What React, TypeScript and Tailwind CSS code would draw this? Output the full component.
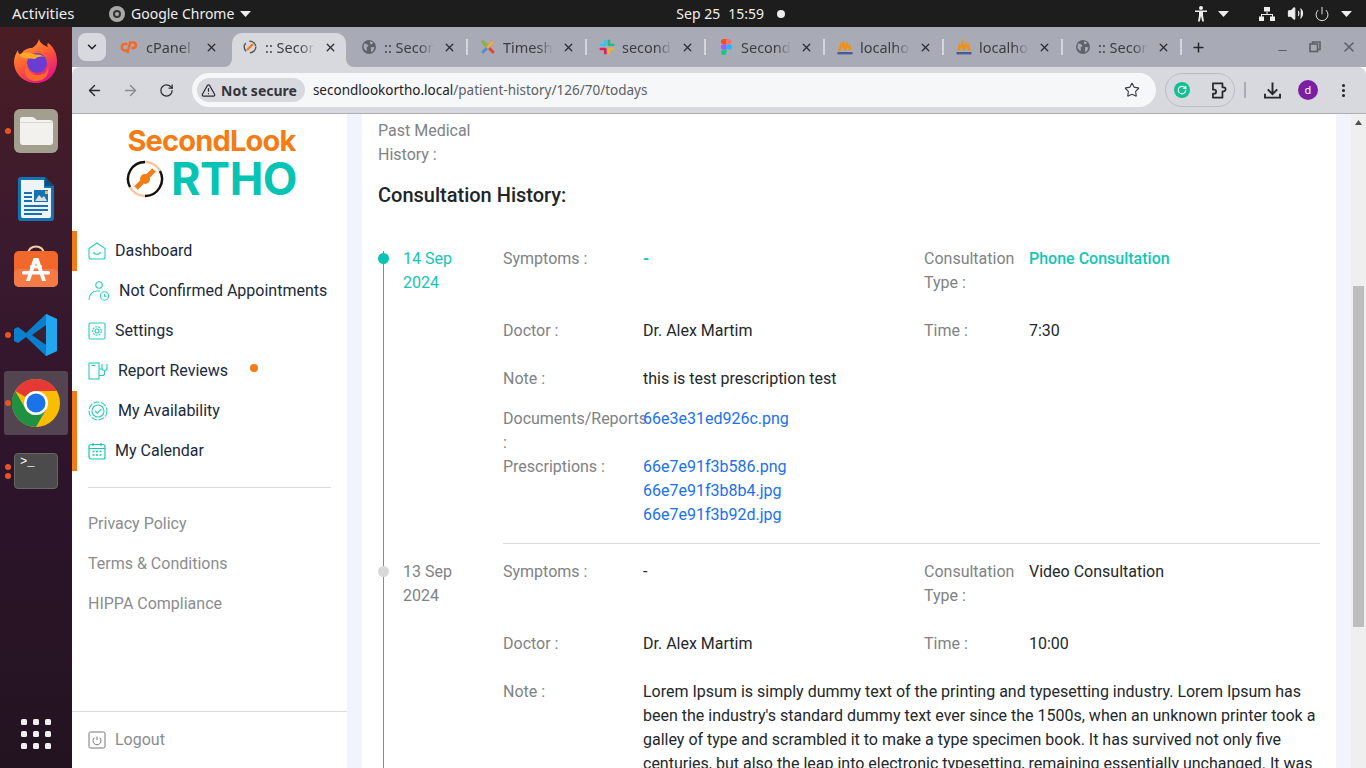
import React from "react";
import { ChevronDown, X, ArrowLeft, ArrowRight, RotateCw, TriangleAlert, Star, EllipsisVertical, Plus, Minus, Power, Volume2 } from "lucide-react";

const Tri = ({ c = "" }: { c?: string }) => (
  <svg width="11" height="6" viewBox="0 0 11 6" className={c}><path d="M0 0h11L5.5 6z" fill="#eee" /></svg>
);

const CP = () => (
  <svg width="18" height="14" viewBox="0 0 18 14" fill="none" stroke="#f26a2a" strokeWidth="2.6" className="-ml-[4px]"><path d="M7.5 4H5a3 3 0 0 0 0 6.5h2.2" /><path d="M7.5 13l2.6-10.5H13a2.8 2.8 0 0 1 0 5.6h-1.5" /></svg>
);
const Slack = () => (
  <svg width="16" height="16" viewBox="0 0 16 16"><rect x="5" y="0.5" width="2.6" height="6.5" rx="1.3" fill="#36c5f0" /><rect x="0.5" y="4.5" width="6.5" height="2.6" rx="1.3" fill="#36c5f0" /><rect x="8.6" y="0.5" width="2.6" height="6.5" rx="1.3" fill="#2eb67d" /><rect x="9" y="4.5" width="6.5" height="2.6" rx="1.3" fill="#2eb67d" /><rect x="8.6" y="9" width="2.6" height="6.5" rx="1.3" fill="#ecb22e" /><rect x="9" y="8.7" width="6.5" height="2.6" rx="1.3" fill="#ecb22e" /><rect x="5" y="9" width="2.6" height="6.5" rx="1.3" fill="#e01e5a" /><rect x="0.5" y="8.7" width="6.5" height="2.6" rx="1.3" fill="#e01e5a" /></svg>
);
const Figma = () => (
  <svg width="11" height="16" viewBox="0 0 11 16"><path d="M0 2.7A2.7 2.7 0 0 1 2.7 0h2.8v5.3H2.7A2.7 2.7 0 0 1 0 2.7z" fill="#f24e1e" /><path d="M5.5 0h2.8a2.7 2.7 0 0 1 0 5.3H5.5z" fill="#ff7262" /><path d="M0 8a2.7 2.7 0 0 1 2.7-2.7h2.8v5.4H2.7A2.7 2.7 0 0 1 0 8z" fill="#a259ff" /><circle cx="8.2" cy="8" r="2.7" fill="#1abcfe" /><path d="M0 13.3a2.7 2.7 0 0 1 2.7-2.6h2.8v2.6a2.7 2.7 0 0 1-5.5 0z" fill="#0acf83" /></svg>
);
const Joomla = () => (
  <svg width="16" height="16" viewBox="0 0 16 16" fill="none" strokeWidth="3" strokeLinecap="round"><path d="M3 3l10 10" stroke="#ee4035" /><path d="M13 3L3 13" stroke="#4f91cd" /><path d="M3 3l5 5" stroke="#7ac143" /><path d="M13 3L8 8" stroke="#f9a541" /></svg>
);
const Pma = () => (
  <svg width="16" height="16" viewBox="0 0 16 16"><path d="M1 11.5L3.5 3l1 4L6.5 0l2 7 1.5-5 1.5 4.5L12.5 4l2.5 7.5h-3L10.5 8 9 11.5H7L5.5 7.5 4 11.5z" fill="#f29111" /><rect x="0.5" y="13" width="15" height="2.4" fill="#4a5a94" /></svg>
);
const SmallLogo = () => (
  <svg width="14" height="14" viewBox="0 0 14 14" fill="none"><circle cx="7" cy="7" r="5.8" stroke="#555" strokeWidth="1.4" strokeDasharray="9 4" /><path d="M4 10l6-6" stroke="#f47b20" strokeWidth="2.4" /></svg>
);
const GlobeFilled = () => (
  <svg width="14" height="14" viewBox="0 0 14 14"><circle cx="7" cy="7" r="7" fill="#5f6368" /><path d="M2 3.5l3 .5 1.5 2-2 1.5.5 3-1.2.3L1.5 8zM8 1.2l3 1-1 2-2-.5zM9 7l3.5.2L11 11l-2 1z" fill="#a8abb6" /></svg>
);

const Tab = ({ icon, title, active = false, sep = true }: { icon: React.ReactNode; title: string; active?: boolean; sep?: boolean }) => (
  <div className="relative flex items-center h-full w-[119px] shrink-0 pb-[6px]">
    {active && (
      <>
        <div className="absolute left-[3px] right-[2px] top-0 bottom-0 bg-[#d8d9df] rounded-t-[10px]" />
        <svg className="absolute left-[-5px] bottom-0" width="8" height="8" viewBox="0 0 8 8"><path d="M8 0v8H0a8 8 0 0 0 8-8z" fill="#d8d9df" /></svg>
        <svg className="absolute right-[-6px] bottom-0" width="8" height="8" viewBox="0 0 8 8"><path d="M0 0v8h8a8 8 0 0 1-8-8z" fill="#d8d9df" /></svg>
      </>
    )}
    <div className="relative w-[13px] shrink-0" />
    <div className="relative w-[16px] shrink-0 flex justify-center items-center">{icon}</div>
    <div className="relative ml-[7px] w-[50px] overflow-hidden whitespace-nowrap text-[14.5px] text-[#3b3d42] leading-[18px] font-['Noto_Sans',sans-serif] [mask-image:linear-gradient(90deg,#000_70%,transparent_100%)]">{title}</div>
    <div className="flex-1" />
    <X size={13} strokeWidth={2.4} className="relative text-[#2b2c30] mr-[11px] shrink-0" />
    {sep && !active && <div className="absolute right-[-1px] top-[6px] w-[2px] h-[16px] bg-[#d5d6db]" />}
  </div>
);

const DockItem = ({ children, dots = 0, active = false }: { children: React.ReactNode; dots?: number; active?: boolean }) => (
  <div className={`relative w-[64px] h-[64px] mx-auto flex items-center justify-center rounded-[3px] ${active ? "bg-[#544451]" : ""}`}>
    {dots > 0 && (
      <div className="absolute left-[1px] top-0 bottom-0 flex flex-col gap-[3px] justify-center">
        {Array.from({ length: dots }).map((_, i) => (
          <div key={i} className="w-[6px] h-[6px] rounded-full bg-[#e95420]" />
        ))}
      </div>
    )}
    {children}
  </div>
);

const Firefox = () => (
  <svg width="46" height="46" viewBox="0 0 46 46" className="-mt-[5px]">
    <defs>
      <linearGradient id="ff" x1="0" y1="0" x2="0.6" y2="1"><stop offset="0" stopColor="#ffb52e" /><stop offset="0.55" stopColor="#ff5b33" /><stop offset="1" stopColor="#e31587" /></linearGradient>
    </defs>
    <path d="M23 45C10 45 1 35 1 24c0-5 2-9 4-12 0 3 1 4 3 5 2-5 6-7 11-7 5-3 6-6 7-9 1 4 4 6 9 8-1-1-1-3 0-4 5 3 9 10 9 18 0 13-9 22-21 22z" fill="url(#ff)" />
    <circle cx="24" cy="25" r="10" fill="#6b3cd1" />
    <path d="M6 17c4-3 9-3 14-1 4 1 8 0 11 3-4-1-7 0-9 2-5-1-11 1-16-4z" fill="#ffa927" />
    <path d="M14 25c0 8 5 13 12 12 5 0 9-4 9-9 2 9-4 15-12 15-9 0-14-8-9-18z" fill="#ff6a2b" />
  </svg>
);
const Files = () => (
  <div className="w-[44px] h-[44px] rounded-[6px] bg-[#a39f8e] flex items-center justify-center">
    <svg width="33" height="28" viewBox="0 0 33 28"><path d="M2 0h11l4 3h13a3 3 0 0 1 3 3v19a3 3 0 0 1-3 3H3a3 3 0 0 1-3-3V2a2 2 0 0 1 2-2z" fill="#f3f1ed" /><path d="M0 5h33v1H0z" fill="#dcd8d0" /></svg>
  </div>
);
const Writer = () => (
  <svg width="36" height="44" viewBox="0 0 36 44"><path d="M3 0h24l9 9v32a3 3 0 0 1-3 3H3a3 3 0 0 1-3-3V3a3 3 0 0 1 3-3z" fill="#1573b3" /><path d="M3 3h23v8h7v28a2 2 0 0 1-2 2H5a2 2 0 0 1-2-2z" fill="#eef3f6" /><path d="M27 0l9 9h-9z" fill="#0e4d7a" /><g fill="#1573b3"><rect x="6" y="15" width="8" height="2" /><rect x="6" y="19" width="8" height="2" /><rect x="6" y="23" width="8" height="2" /><rect x="6" y="28" width="24" height="2" /><rect x="6" y="32" width="24" height="2" /><rect x="6" y="36" width="18" height="2" /></g><rect x="16" y="13" width="14" height="12" fill="#1573b3" /><path d="M17 24l4-6 3 3 2-2 3 5z" fill="#ddd" /><rect x="27" y="14" width="3" height="3" fill="#f5c13d" /></svg>
);
const AppStore = () => (
  <svg width="44" height="44" viewBox="0 0 44 44"><path d="M14 9c0-10 16-10 16 0" fill="none" stroke="#f4cda6" strokeWidth="2" /><rect x="0" y="6" width="44" height="36" rx="5" fill="#f2672a" /><rect x="0" y="24" width="44" height="18" rx="5" fill="#f47b45" /><path d="M19.5 13h5L32 36h-4l-6-18-6 18h-4z" fill="#fff" /><rect x="8" y="26" width="28" height="3.5" rx="1.5" fill="#fff" /><rect x="16" y="20.5" width="12" height="3" fill="#fff" /></svg>
);
const VSCode = () => (
  <svg width="44" height="44" viewBox="0 0 44 44"><path d="M32 1L12 20 4 14 0 16v12l4 2 8-6 20 19 11-5V6z" fill="#0a7fcb" /><path d="M32 1l11 5v32l-11 5z" fill="#22a6f0" /><path d="M32 12L18 22l14 10z" fill="#3b1f33" /></svg>
);
const Chrome = () => (
  <svg width="48" height="48" viewBox="0 0 48 48">
    <circle cx="24" cy="24" r="24" fill="#fbbc04" />
    <path d="M24 0a24 24 0 0 1 20.8 12H24a12 12 0 0 0-10.4 6L3.2 12A24 24 0 0 1 24 0z" fill="#e53935" />
    <path d="M3.2 12A24 24 0 0 0 24 48l10.4-18-10.4 6a12 12 0 0 1-10.4-6z" fill="#1e9142" />
    <circle cx="24" cy="24" r="12" fill="#fff" /><circle cx="24" cy="24" r="9.5" fill="#1a73e8" />
  </svg>
);
const Terminal = () => (
  <div className="w-[44px] h-[36px] rounded-[4px] bg-[#4b4b4b] border border-[#666] relative">
    <span className="absolute left-[5px] top-[0px] text-[12px] text-white font-['Liberation_Mono',monospace] leading-[16px]">&gt;_</span>
  </div>
);

const NavIcon = ({ kind }: { kind: string }) => {
  const p = { fill: "none", stroke: "#2bcdbc", strokeWidth: 1.1 } as const;
  if (kind === "home") return <svg width="18" height="18" viewBox="0 0 18 18" {...p}><path d="M1 6.5L9 1l8 5.5V15a2 2 0 0 1-2 2H3a2 2 0 0 1-2-2z" /><path d="M5.5 10c1 3 6 3 7 0" /></svg>;
  if (kind === "user") return <svg width="22" height="20" viewBox="0 0 22 20" {...p}><circle cx="11" cy="4" r="3.2" /><path d="M1 19c0-5 3-9 8-9h3" /><circle cx="16.5" cy="15" r="4.2" /><path d="M16.5 13v2.2h2" /></svg>;
  if (kind === "gear") return <svg width="18" height="18" viewBox="0 0 18 18" {...p}><rect x="1" y="1" width="16" height="16" rx="1.5" /><circle cx="9" cy="9" r="2" /><circle cx="9" cy="9" r="4.3" strokeDasharray="2 1" /></svg>;
  if (kind === "report") return <svg width="20" height="18" viewBox="0 0 20 18" {...p}><rect x="1" y="1" width="10" height="16" /><path d="M3.5 3.5h4M11 7h3" /><path d="M14 2v4a2.5 2.5 0 0 0 5 0V2M16.5 8.5v3a2 2 0 0 1-2 2H11" /></svg>;
  if (kind === "avail") return <svg width="20" height="20" viewBox="0 0 20 20" {...p}><circle cx="10" cy="10" r="9" strokeDasharray="6 1.5" /><circle cx="10" cy="10" r="6" /><path d="M7 10l2.2 2.2L13.5 8" /></svg>;
  if (kind === "cal") return <svg width="18" height="18" viewBox="0 0 18 18" fill="none" stroke="#14c6b5" strokeWidth="1.2"><rect x="1" y="2.5" width="16" height="14.5" rx="2" /><path d="M1 6.5h16M5 1v3M13 1v3" /><path d="M4.5 9.5h2M8 9.5h2M11.5 9.5h2M4.5 13h2M8 13h2M11.5 13h2" strokeWidth="1.5" /></svg>;
  return <svg width="18" height="18" viewBox="0 0 18 18" fill="none" stroke="#777" strokeWidth="1"><rect x="1" y="1" width="16" height="16" rx="1.5" /><path d="M9 5.5V9" /><path d="M6.3 6.8a4 4 0 1 0 5.4 0" /></svg>;
};

const NavItem = ({ icon, label, gap, bar = false, dot = false }: { icon: string; label: string; gap: number; bar?: boolean; dot?: boolean }) => (
  <div className={`flex items-center h-[40px] pl-[11px] border-l-[5px] ${bar ? "border-[#f57c14]" : "border-transparent"}`}>
    <div className="w-[18px] flex items-center shrink-0">
      <div className="shrink-0"><NavIcon kind={icon} /></div>
    </div>
    <span className="text-[16px] text-[#20293a] whitespace-nowrap" style={{ marginLeft: gap }}>{label}</span>
    {dot && <div className="w-[8px] h-[8px] rounded-full bg-[#f57c14] ml-[22px] -mt-[6px]" />}
  </div>
);

const Label = ({ children, w }: { children: React.ReactNode; w: string }) => (
  <div className={`${w} shrink-0 text-[#808285]`}>{children}</div>
);

const Row = ({ l1, v1, l2, v2, h, vc = "text-[#23272b]" }: { l1: string; v1: React.ReactNode; l2: React.ReactNode; v2: React.ReactNode; h: number; vc?: string }) => (
  <div className="flex" style={{ height: h }}>
    <Label w="w-[140px]">{l1}</Label>
    <div className={`w-[281px] shrink-0 ${vc}`}>{v1}</div>
    <Label w="w-[105px]">{l2}</Label>
    <div className={`${vc}`}>{v2}</div>
  </div>
);

const Lnk = ({ children }: { children: React.ReactNode }) => <div className="text-[#1b6ff5]">{children}</div>;

export default function App() {
  return (
    <div className="w-[1366px] h-[768px] overflow-hidden flex flex-col bg-white font-['Roboto',sans-serif]">
      {/* Ubuntu top bar */}
      <div className="h-[27px] shrink-0 bg-[#1d1d1d] flex items-center relative font-['Noto_Sans','Open_Sans',sans-serif] text-[14px] text-[#eeeeee]">
        <span className="ml-[12px] w-[97px] text-[15px]">Activities</span>
        <div className="w-[16px] h-[16px] rounded-full bg-[#a9a9a9] flex items-center justify-center">
          <div className="w-[8px] h-[8px] rounded-full border-2 border-[#333]" />
        </div>
        <span className="ml-[6px]">Google Chrome</span>
        <Tri c="ml-[6px]" />
        <div className="flex-1 flex justify-center items-center pl-[16px]">
          <span>Sep 25</span>
          <span className="ml-[8px]">15:59</span>
          <div className="w-[8px] h-[8px] rounded-full bg-[#eee] ml-[13px]" />
        </div>
        <svg width="14" height="16" viewBox="0 0 14 16" fill="#eee"><circle cx="7" cy="2" r="2" /><path d="M1 4.5h12v1.6H9v3.2l1 6.2H8.2L7 10l-1.2 5.5H4L5 9.3V6.1H1z" /></svg>
        <Tri c="ml-[10px]" />
        <svg className="ml-[30px]" width="16" height="14" viewBox="0 0 16 14" fill="#eee"><rect x="5" y="0" width="6" height="4.5" /><rect x="0" y="9.5" width="5" height="4.5" /><rect x="11" y="9.5" width="5" height="4.5" /><path d="M7.5 4.5h1V7H14v3h-1V8H3v2H2V7h5.5z" /></svg>
        <Volume2 size={17} className="ml-[12px] text-[#eee]" fill="#eee" strokeWidth={1.5} />
        <Power size={16} className="ml-[10px] text-[#eee]" strokeWidth={1.4} />
        <Tri c="ml-[11px] mr-[14px]" />
      </div>

      <div className="flex-1 flex min-h-0">
        {/* Dock */}
        <div className="w-[72px] shrink-0 bg-[linear-gradient(180deg,#4a1d24_0%,#3a1a2e_30%,#2d142b_60%,#231320_100%)] flex flex-col pt-[4px] relative">
          <div className="flex flex-col gap-[4px]">
            <DockItem><Firefox /></DockItem>
            <DockItem dots={1}><Files /></DockItem>
            <DockItem><Writer /></DockItem>
            <DockItem><AppStore /></DockItem>
            <DockItem dots={1}><VSCode /></DockItem>
            <DockItem dots={1} active><Chrome /></DockItem>
            <DockItem dots={2}><Terminal /></DockItem>
          </div>
          <div className="mt-auto mb-[19px] mx-auto grid grid-cols-3 gap-[6px]">
            {Array.from({ length: 9 }).map((_, i) => (
              <div key={i} className="w-[6px] h-[6px] rounded-[1.5px] bg-[#f1eff0]" />
            ))}
          </div>
        </div>

        <div className="flex-1 min-w-0 flex flex-col">
          {/* Tabs */}
          <div className="h-[40px] shrink-0 bg-[#a8abb6] flex items-end">
            <div className="h-[40px] flex items-start pt-[6px] pl-[6px] pr-[4px]">
              <div className="w-[28px] h-[28px] rounded-[8px] bg-[#d8d9df] flex items-center justify-center">
                <ChevronDown size={14} strokeWidth={2.6} className="text-[#222]" />
              </div>
            </div>
            <div className="h-[34px] flex">
              <Tab icon={<CP />} title="cPanel -" sep={false} />
              <Tab icon={<SmallLogo />} title=":: Second" active />
              <Tab icon={<GlobeFilled />} title=":: Second" />
              <Tab icon={<Joomla />} title="Timesheet" />
              <Tab icon={<Slack />} title="secondlook" />
              <Tab icon={<Figma />} title="SecondLook" />
              <Tab icon={<Pma />} title="localhost" />
              <Tab icon={<Pma />} title="localhost" />
              <Tab icon={<GlobeFilled />} title=":: Second" />
            </div>
            <div className="h-[34px] flex items-center pb-[6px]">
              <Plus size={15} strokeWidth={2.4} className="ml-[10px] text-[#26272b]" />
              <Minus size={13} strokeWidth={2.2} className="ml-[70px] mt-[7px] text-[#5d5f66]" />
              <svg className="ml-[20px]" width="12" height="12" viewBox="0 0 12 12" fill="none" stroke="#5d5f66" strokeWidth="1.6"><rect x="1" y="3" width="7.5" height="7.5" /><path d="M3.5 3V1h7.5v7.5H8.5" /></svg>
              <X size={16} strokeWidth={2.4} className="ml-[20px] text-[#5d5f66]" />
            </div>
          </div>

          {/* Toolbar */}
          <div className="h-[47px] shrink-0 bg-[#d8d9df] border-b border-[#adaeb5] flex items-center rounded-t-[8px]">
            <ArrowLeft size={17} strokeWidth={2} className="ml-[14px] text-[#2a2b2f]" />
            <ArrowRight size={17} strokeWidth={2} className="ml-[19px] text-[#8a8b90]" />
            <RotateCw size={15} strokeWidth={2} className="ml-[20px] text-[#2a2b2f]" />
            <div className="ml-[18px] h-[34px] w-[964px] rounded-full bg-[#f6f7f9] flex items-center pl-[5px] shrink-0">
              <div className="h-[24px] rounded-full bg-[#d8d9df] flex items-center pl-[4px] pr-[8px]">
                <TriangleAlert size={15} strokeWidth={2} className="text-[#2a2b2f]" />
                <span className="ml-[5px] text-[14px] font-bold text-[#33353a] font-['Noto_Sans',sans-serif]">Not secure</span>
              </div>
              <span className="ml-[8px] text-[13.5px] font-['Noto_Sans',sans-serif] text-[#1f2023]">secondlookortho.local<span className="text-[#5c5e63]">/patient-history/126/70/todays</span></span>
              <div className="flex-1" />
              <Star size={16} strokeWidth={1.7} className="mr-[16px] text-[#3c3d42]" />
            </div>
            <div className="ml-[9px] h-[34px] w-[70px] rounded-full border border-[#bcbdc4] flex items-center">
              <div className="ml-[8px] w-[16px] h-[16px] rounded-full bg-[#12bf8f] flex items-center justify-center">
                <RotateCw size={10} strokeWidth={3} className="text-white" />
              </div>
              <svg className="ml-[19px]" width="19" height="19" viewBox="0 0 24 24" fill="none" stroke="#26272b" strokeWidth="2.2" strokeLinejoin="round"><path d="M5 3h12v5h1.5a2 2 0 0 1 0 5H17v8H5v-5h1.5a2.5 2.5 0 0 0 0-5H5z" /></svg>
            </div>
            <div className="ml-[9px] w-[2px] h-[16px] bg-[#a8abb6]" />
            <svg className="ml-[17px]" width="19" height="19" viewBox="0 0 24 24" fill="none" stroke="#26272b" strokeWidth="2.4"><path d="M12 2v14M6 10.5l6 6 6-6M2.5 16v5h19v-5" /></svg>
            <div className="ml-[16px] w-[20px] h-[20px] rounded-full bg-[#7b1fa2] flex items-center justify-center text-white text-[11px] font-['Noto_Sans',sans-serif]">d</div>
            <EllipsisVertical size={17} strokeWidth={2.4} className="ml-[17px] text-[#26272b]" />
          </div>

          {/* Page */}
          <div className="flex-1 min-h-0 flex overflow-hidden">
            {/* Sidebar */}
            <div className="w-[275px] shrink-0 bg-white flex flex-col">
              <div className="h-[117px] pt-[10px] flex flex-col items-center pl-[4px]">
                <div className="text-[29px] font-['Inter',sans-serif] font-bold text-[#f57c14] leading-[34px] tracking-[-0.8px]">SecondLook</div>
                <div className="flex items-center h-[40px] mt-[1px]">
                  <svg width="38" height="38" viewBox="0 0 38 38" fill="none">
                    <circle cx="19" cy="19" r="17" stroke="#fcc49a" strokeWidth="2.4" />
                    <path d="M19 2A17 17 0 0 0 4 27" stroke="#111" strokeWidth="2.4" />
                    <path d="M19 36A17 17 0 0 0 34 11" stroke="#111" strokeWidth="2.4" />
                    <path d="M10 28l6-6M22 16l6-6" stroke="#f57c14" strokeWidth="5" />
                    <circle cx="19" cy="19" r="5" fill="#f57c14" />
                  </svg>
                  <span className="text-[45px] font-['Inter',sans-serif] font-bold text-[#05c4b4] leading-[40px] ml-[7px] tracking-[-0.5px]">RTHO</span>
                </div>
              </div>
              <NavItem icon="home" label="Dashboard" gap={9} bar />
              <NavItem icon="user" label="Not Confirmed Appointments" gap={13} />
              <NavItem icon="gear" label="Settings" gap={9} />
              <NavItem icon="report" label="Report Reviews" gap={12} dot />
              <NavItem icon="avail" label="My Availability" gap={12} bar />
              <NavItem icon="cal" label="My Calendar" gap={9} bar />
              <div className="mx-[16px] mt-[16px] h-px bg-[#dcdcdc]" />
              <div className="pl-[16px] mt-[16px] flex flex-col text-[16px] text-[#8a8c8f] leading-[40px]">
                <div>Privacy Policy</div>
                <div>Terms &amp; Conditions</div>
                <div>HIPPA Compliance</div>
              </div>
              <div className="mt-auto h-[57px] border-t border-[#dcdcdc] flex items-center pl-[16px]">
                <NavIcon kind="power" />
                <span className="ml-[9px] text-[16px] text-[#8a8c8f]">Logout</span>
              </div>
            </div>

            <div className="w-[15px] shrink-0 bg-[#f1f3fd]" />

            {/* Main */}
            <div className="w-[974px] shrink-0 bg-white pl-[16px] pr-[16px] text-[16px] leading-[24px]">
              <div className="w-[100px] text-[#808285] pt-[4px] mt-[1px]">Past Medical History :</div>
              <div className="mt-[16px] text-[20px] leading-[24px] font-medium text-[#212529]">Consultation History:</div>

              <div className="mt-[40px] relative">
                <div className="absolute left-[5px] top-[4px] bottom-[-400px] w-px bg-[#08c4b4]" />
                {/* Entry 1 */}
                <div className="flex">
                  <div className="w-[25px] shrink-0 relative">
                    <div className="absolute left-0 top-[6px] w-[11px] h-[11px] rounded-full bg-[#08c4b4]" />
                  </div>
                  <div className="w-[100px] shrink-0 text-[#14c6b5]"><div className="w-[60px]">14 Sep 2024</div></div>
                  <div className="flex-1 min-w-0">
                    <Row l1="Symptoms :" v1={<span className="text-[#14c6b5] font-bold">-</span>} l2={<div className="w-[95px]">Consultation Type :</div>} v2={<span className="text-[#14c6b5] font-medium">Phone Consultation</span>} h={72} />
                    <Row l1="Doctor :" v1="Dr. Alex Martim" l2="Time :" v2="7:30" h={48} />
                    <div className="flex h-[40px]">
                      <Label w="w-[140px]">Note :</Label>
                      <div className="text-[#23272b]">this is test prescription test</div>
                    </div>
                    <div className="flex h-[48px]">
                      <Label w="w-[140px]"><span className="whitespace-nowrap">Documents/Reports</span> :</Label>
                      <Lnk>66e3e31ed926c.png</Lnk>
                    </div>
                    <div className="flex h-[89px] border-b border-[#dcdcdc]">
                      <Label w="w-[140px]">Prescriptions :</Label>
                      <div>
                        <Lnk>66e7e91f3b586.png</Lnk>
                        <Lnk>66e7e91f3b8b4.jpg</Lnk>
                        <Lnk>66e7e91f3b92d.jpg</Lnk>
                      </div>
                    </div>
                  </div>
                </div>
                {/* Entry 2 */}
                <div className="flex mt-[16px]">
                  <div className="w-[25px] shrink-0 relative">
                    <div className="absolute left-0 top-[6px] w-[11px] h-[11px] rounded-full bg-[#d9d9d9]" />
                  </div>
                  <div className="w-[100px] shrink-0 text-[#808285]"><div className="w-[60px]">13 Sep 2024</div></div>
                  <div className="flex-1 min-w-0">
                    <Row l1="Symptoms :" v1="-" l2={<div className="w-[95px]">Consultation Type :</div>} v2="Video Consultation" h={72} />
                    <Row l1="Doctor :" v1="Dr. Alex Martim" l2="Time :" v2="10:00" h={48} />
                    <div className="flex">
                      <Label w="w-[140px]">Note :</Label>
                      <div className="text-[#23272b]">Lorem Ipsum is simply dummy text of the printing and typesetting industry. Lorem Ipsum has been the industry's standard dummy text ever since the 1500s, when an unknown printer took a galley of type and scrambled it to make a type specimen book. It has survived not only five centuries, but also the leap into electronic typesetting, remaining essentially unchanged. It was</div>
                    </div>
                  </div>
                </div>
              </div>
            </div>

            <div className="w-[15px] shrink-0 bg-[#f1f3fd]" />

            {/* Scrollbar */}
            <div className="w-[15px] shrink-0 bg-[#efefef] flex flex-col items-center">
              <svg className="mt-[6px]" width="7" height="5" viewBox="0 0 7 5"><path d="M3.5 0L7 5H0z" fill="#505050" /></svg>
              <div className="mt-[161px] w-[11px] h-[341px] bg-[#bdbdbd]" />
            </div>
          </div>
        </div>
      </div>
    </div>
  );
}
